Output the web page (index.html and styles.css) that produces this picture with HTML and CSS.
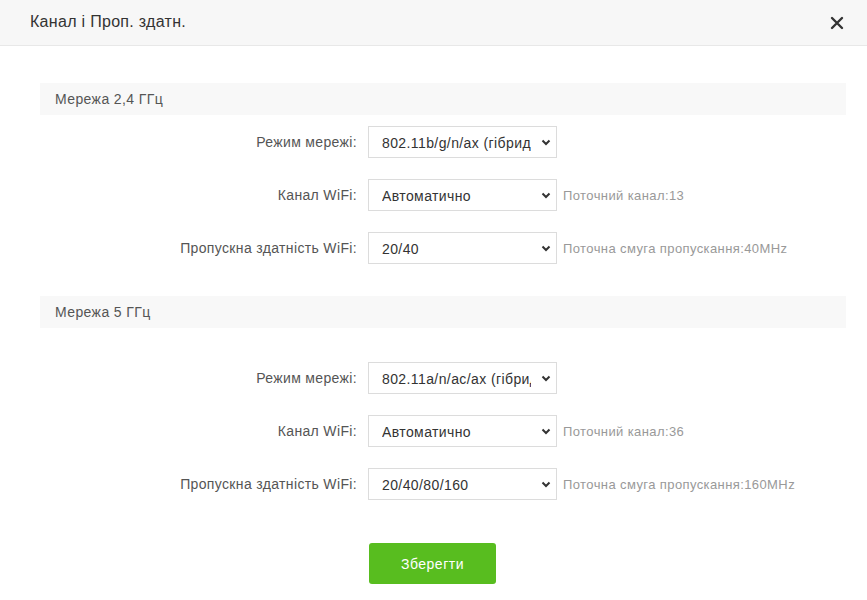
FILE: index.html
```html
<!DOCTYPE html>
<html lang="uk">
<head>
<meta charset="utf-8">
<title>Канал і Проп. здатн.</title>
<link rel="stylesheet" href="styles.css">
</head>
<body>
<div class="dialog">
  <div class="dialog-header">
    <span class="dialog-title">Канал і Проп. здатн.</span>
    <button class="close" aria-label="close">
      <svg width="14" height="14" viewBox="0 0 14 14"><path d="M2 2 L12 12 M12 2 L2 12" stroke="#333" stroke-width="2.4" stroke-linecap="round"/></svg>
    </button>
  </div>
  <div class="dialog-body">
    <div class="section">
      <div class="section-title">Мережа 2,4 ГГц</div>
      <div class="rows">
        <div class="row">
          <label class="label">Режим мережі:</label>
          <div class="select-wrap">
            <select class="select"><option>802.11b/g/n/ax (гібридний)</option></select>
            <svg class="chev" width="10" height="7" viewBox="0 0 10 7"><path d="M1.5 1.5 L5 5 L8.5 1.5" fill="none" stroke="#333" stroke-width="2"/></svg>
          </div>
          <span class="hint"></span>
        </div>
        <div class="row">
          <label class="label">Канал WiFi:</label>
          <div class="select-wrap">
            <select class="select"><option>Автоматично</option></select>
            <svg class="chev" width="10" height="7" viewBox="0 0 10 7"><path d="M1.5 1.5 L5 5 L8.5 1.5" fill="none" stroke="#333" stroke-width="2"/></svg>
          </div>
          <span class="hint">Поточний канал:13</span>
        </div>
        <div class="row">
          <label class="label">Пропускна здатність WiFi:</label>
          <div class="select-wrap">
            <select class="select"><option>20/40</option></select>
            <svg class="chev" width="10" height="7" viewBox="0 0 10 7"><path d="M1.5 1.5 L5 5 L8.5 1.5" fill="none" stroke="#333" stroke-width="2"/></svg>
          </div>
          <span class="hint">Поточна смуга пропускання:40MHz</span>
        </div>
      </div>
    </div>
    <div class="section section-5g">
      <div class="section-title">Мережа 5 ГГц</div>
      <div class="rows">
        <div class="row">
          <label class="label">Режим мережі:</label>
          <div class="select-wrap">
            <select class="select"><option>802.11a/n/ac/ax (гібридний)</option></select>
            <svg class="chev" width="10" height="7" viewBox="0 0 10 7"><path d="M1.5 1.5 L5 5 L8.5 1.5" fill="none" stroke="#333" stroke-width="2"/></svg>
          </div>
          <span class="hint"></span>
        </div>
        <div class="row">
          <label class="label">Канал WiFi:</label>
          <div class="select-wrap">
            <select class="select"><option>Автоматично</option></select>
            <svg class="chev" width="10" height="7" viewBox="0 0 10 7"><path d="M1.5 1.5 L5 5 L8.5 1.5" fill="none" stroke="#333" stroke-width="2"/></svg>
          </div>
          <span class="hint">Поточний канал:36</span>
        </div>
        <div class="row">
          <label class="label">Пропускна здатність WiFi:</label>
          <div class="select-wrap">
            <select class="select"><option>20/40/80/160</option></select>
            <svg class="chev" width="10" height="7" viewBox="0 0 10 7"><path d="M1.5 1.5 L5 5 L8.5 1.5" fill="none" stroke="#333" stroke-width="2"/></svg>
          </div>
          <span class="hint">Поточна смуга пропускання:160MHz</span>
        </div>
      </div>
    </div>
    <div class="actions">
      <button class="btn-save">Зберегти</button>
    </div>
  </div>
</div>
</body>
</html>
```
FILE: styles.css
```css
* { box-sizing: border-box; }
html, body {
  margin: 0;
  padding: 0;
  background: #fff;
  font-family: "Liberation Sans", Arial, sans-serif;
  color: #333;
}
.dialog {
  width: 867px;
  height: 600px;
  overflow: hidden;
}
.dialog-header {
  height: 46px;
  background: #f7f7f7;
  border-bottom: 1px solid #e8e8e8;
  display: flex;
  align-items: center;
  justify-content: space-between;
  padding: 0 22px 2px 30px;
}
.dialog-title {
  font-size: 16px;
  letter-spacing: 0.3px;
  color: #333;
}
.close {
  border: 0;
  background: transparent;
  padding: 0;
  width: 16px;
  height: 16px;
  display: flex;
  align-items: center;
  justify-content: center;
  margin-top: 2px;
}
.dialog-body {
  padding: 37px 21px 0 40px;
}
.section-title {
  height: 32px;
  background: #f8f8f8;
  font-size: 14px;
  letter-spacing: 0.4px;
  color: #555;
  display: flex;
  align-items: center;
  padding-left: 15px;
}
.rows {
  display: flex;
  flex-direction: column;
  gap: 21px;
  padding-top: 11px;
}
.section-5g {
  margin-top: 32px;
}
.section-5g .rows {
  padding-top: 34px;
}
.row {
  display: grid;
  grid-template-columns: 317px 189px auto;
  column-gap: 11px;
  align-items: center;
  height: 32px;
}
.label {
  text-align: right;
  font-size: 14px;
  letter-spacing: 0.35px;
  color: #555;
}
.select-wrap {
  position: relative;
  width: 189px;
  height: 32px;
}
.select {
  -webkit-appearance: none;
  appearance: none;
  width: 100%;
  height: 100%;
  border: 1px solid #dcdcdc;
  border-radius: 0;
  background: #fff;
  font-family: "Liberation Sans", Arial, sans-serif;
  font-size: 14px;
  letter-spacing: 0.4px;
  color: #333;
  padding: 1px 25px 0 13px;
  outline: none;
}
.chev {
  position: absolute;
  right: 6px;
  top: 13px;
  pointer-events: none;
}
.hint {
  font-size: 13px;
  letter-spacing: 0.4px;
  color: #999;
  margin-left: -5px;
  white-space: nowrap;
}
.actions {
  display: flex;
  padding-top: 43px;
  padding-left: 329px;
}
.btn-save {
  width: 127px;
  height: 41px;
  border: 0;
  border-radius: 3px;
  background: #58bd1f;
  color: #fff;
  font-family: "Liberation Sans", Arial, sans-serif;
  font-size: 14px;
  letter-spacing: 0.5px;
}
```
